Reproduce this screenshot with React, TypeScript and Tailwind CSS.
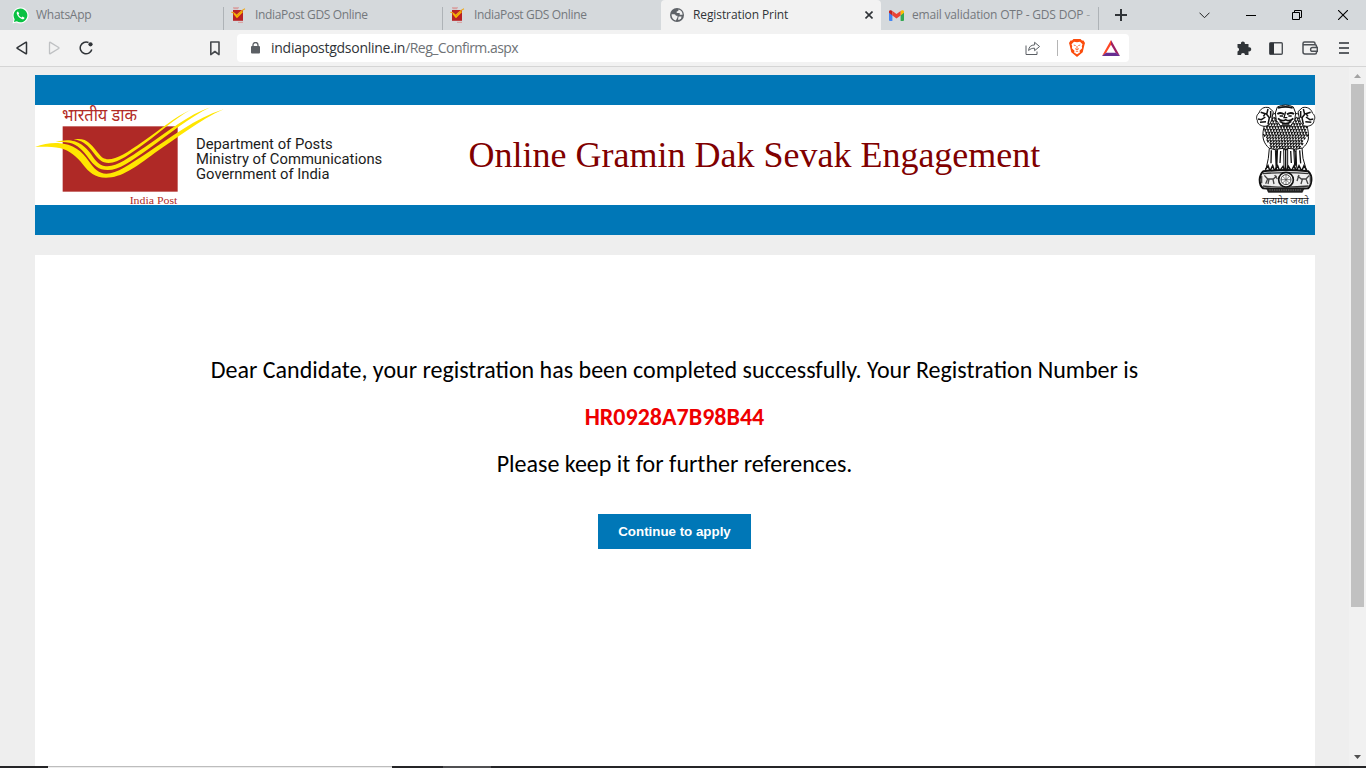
import React from "react";

type Kids = { children: React.ReactNode };

function WhatsAppIcon() {
  return (
    <svg width="17" height="17" viewBox="0 0 17 17">
      <path d="M.5 16.5 1.6 12.4A8 8 0 1 1 4.6 15.4Z" fill="#fff" />
      <path d="M1.9 15.1 2.7 12.2A6.9 6.9 0 1 1 4.9 14.3Z" fill="#0ac143" />
      <path
        d="M6 4.4c-.9.2-1.6 1.2-1.2 2.4.8 2.5 3 4.7 5.4 5.4 1.2.3 2.2-.4 2.3-1.5l-2-1.1-.9.9C8.200 10 7 8.800 6.500 7.500l.7-.9Z"
        fill="#fff"
      />
    </svg>
  );
}

function PostIcon() {
  return (
    <svg width="15" height="16" viewBox="0 0 15 16">
      <path d="M2 .8h6M2.500 1.700h4.500M7 15.300h5" stroke="#d99a9a" strokeWidth="1" />
      <rect x="2" y="3" width="10" height="10.800" fill="#b92125" />
      <path d="M.3 5.300c2.500-.3 3.600.8 5 3.300C8 6.600 10 3.500 14 1.800" stroke="#f0a818" strokeWidth="1.200" fill="none" />
      <path d="M3 6.500l3 3.500L11.500 4.500" stroke="#f7b500" strokeWidth="1.600" fill="none" />
    </svg>
  );
}

function GlobeIcon() {
  return (
    <svg width="14" height="14" viewBox="0 0 14 14">
      <circle cx="7" cy="7" r="7" fill="#5f6368" />
      <path d="M1.600 6.200h2.800q1.300.1 1.500 1.500h1.600v1.500L5.900 12.600A5.700 5.700 0 0 1 1.600 6.200Z" fill="#f2f2f2" />
      <path d="M8.600 1.600Q8.700 3.500 6.700 3.500V5h3v1.700h2.900A5.700 5.700 0 0 0 8.600 1.600Z" fill="#f2f2f2" />
      <path d="M8.600 8.500h3l-.5 1.800-1.600 1.500H8Z" fill="#f2f2f2" />
    </svg>
  );
}

function GmailIcon() {
  return (
    <svg width="15" height="11" viewBox="0 0 15 11">
      <path d="M0 2.200 3.400 4.700V11H1a1 1 0 0 1-1-1Z" fill="#4285f4" />
      <path d="M15 2.200 11.600 4.700V11H14a1 1 0 0 0 1-1Z" fill="#34a853" />
      <path d="M11.600 1 13 .3c1-.5 2 .3 2 1.200v1.300l-3.400 2.600Z" fill="#fbbc04" />
      <path d="M3.400 1 2 .3C1 -.2 0 .6 0 1.500v1.300l3.400 2.600Z" fill="#c5221f" />
      <path d="M3.400 1 7.500 4.100 11.600 1v4.400L7.500 8.500 3.400 5.400Z" fill="#ea4335" />
    </svg>
  );
}

function TabText({ children }: Kids) {
  return <span className="whitespace-nowrap text-[12px] leading-[16px]">{children}</span>;
}

function TabBar() {
  return (
    <div className="flex h-[30px] bg-[#d5d9dc] font-['Open_Sans',sans-serif] text-[#74787c]">
      <div className="flex w-[223px] items-center pl-[12px]">
        <WhatsAppIcon />
        <span className="ml-[7px] flex tracking-[-0.25px]"><TabText>WhatsApp</TabText></span>
      </div>
      {[0, 1].map((i) => (
        <div key={i} className="flex w-[219px] items-center">
          <div className="mt-[7px] h-[23px] w-px bg-[#aeb3b7]" />
          <div className="ml-[7px]"><PostIcon /></div>
          <span className="ml-[9px] flex tracking-[-0.33px]"><TabText>IndiaPost GDS Online</TabText></span>
        </div>
      ))}
      <div className="flex w-[220px] items-center rounded-t-[4px] bg-[#f2f2f2] pl-[9px] text-[#303438]">
        <GlobeIcon />
        <span className="ml-[9px] flex tracking-[-0.1px]"><TabText>Registration Print</TabText></span>
        <svg className="ml-auto mr-[8px]" width="8" height="8" viewBox="0 0 8 8">
          <path d="M.5.5l7 7M7.500.5l-7 7" stroke="#303438" strokeWidth="1.600" />
        </svg>
      </div>
      <div className="flex w-[218px] items-center pl-[8px]">
        <GmailIcon />
        <span className="ml-[8px] flex tracking-[-0.19px]">
          <TabText>email validation OTP - GDS DOP <span className="text-[#a0a4a7]">-</span></TabText>
        </span>
        <div className="ml-auto mt-[7px] h-[23px] w-px bg-[#aeb3b7]" />
      </div>
      <div className="flex flex-1 items-center text-black">
        <svg className="ml-[16px]" width="12" height="12" viewBox="0 0 12 12">
          <path d="M6 0v12M0 6h12" stroke="#303438" strokeWidth="2" />
        </svg>
        <svg className="ml-[72px]" width="11" height="7" viewBox="0 0 11 7">
          <path d="M.5.7l5 5 5-5" stroke="#222" fill="none" />
        </svg>
        <div className="ml-[36px] h-px w-[10px] bg-black" />
        <svg className="ml-[36px]" width="10" height="10" viewBox="0 0 10 10">
          <path d="M.5 2.500h7v7h-7zM2.500 2.500v-2h7v7h-2" stroke="#000" fill="none" />
        </svg>
        <svg className="ml-[36px]" width="10" height="10" viewBox="0 0 10 10">
          <path d="M0 0l10 10M10 0L0 10" stroke="#000" strokeWidth="1.100" />
        </svg>
      </div>
    </div>
  );
}

function Toolbar() {
  return (
    <div className="flex h-[37px] items-center border-b border-[#d5d5d5] bg-[#f2f2f2]">
      <svg className="ml-[16px]" width="12" height="14" viewBox="0 0 12 14">
        <path d="M10.500 1.800v10.400q0 .9-.8.4L1.300 7.500q-.6-.5 0-1L9.700 1.400q.8-.5.800.4Z" stroke="#303438" strokeWidth="1.500" fill="none" />
      </svg>
      <svg className="ml-[20px]" width="12" height="14" viewBox="0 0 12 14">
        <path d="M1.500 1.800v10.400q0 .9.8.4L10.700 7.500q.6-.5 0-1L2.300 1.400q-.8-.5-.8.4Z" stroke="#bfc1c3" strokeWidth="1.300" fill="none" />
      </svg>
      <svg className="ml-[19px]" width="15" height="14" viewBox="0 0 15 14">
        <path d="M12.800 8.500A5.900 5.900 0 1 1 9.500 1.500" stroke="#303438" strokeWidth="1.500" fill="none" />
        <circle cx="11.500" cy="3.300" r="2.100" fill="#303438" />
      </svg>
      <svg className="ml-[115px]" width="12" height="15" viewBox="0 0 12 15">
        <path d="M1.800 1h8.200v12.600L5.900 10.500 1.800 13.600Z" stroke="#46494d" strokeWidth="1.600" fill="none" strokeLinejoin="round" />
      </svg>
      <div className="ml-[16px] flex h-[28px] w-[892px] items-center rounded-[4px] bg-white pl-[14px]">
        <svg width="9" height="12" viewBox="0 0 9 12">
          <rect x="0" y="4" width="9" height="7.500" rx="1" fill="#5b5f64" />
          <path d="M2 4.500V3a2.500 2.500 0 0 1 5 0v1.500" stroke="#5b5f64" strokeWidth="1.300" fill="none" />
        </svg>
        <span className="ml-[11px] whitespace-nowrap font-['Open_Sans',sans-serif] text-[14px] leading-[20px] text-[#303438]">
          <span className="tracking-[-0.27px]">indiapostgdsonline.in</span>
          <span className="tracking-[-0.54px] text-[#6e7276]">/Reg_Confirm.aspx</span>
        </span>
        <svg className="ml-auto" width="16" height="14" viewBox="0 0 16 14">
          <path d="M1 4.500v9h11v-3" stroke="#5b5f64" fill="none" />
          <path d="M3.600 9.500c.2-3.700 2.400-5.500 6-5.600V1.300l5 4.200-5 4.200V7.200C7 7.200 5.400 7.800 3.600 9.500Z" stroke="#5b5f64" fill="none" strokeLinejoin="round" />
        </svg>
        <div className="ml-[16px] h-[16px] w-px bg-[#b5b5b5]" />
        <svg className="ml-[11px]" width="16" height="18" viewBox="0 0 16 18">
          <path d="M4.500 0h7l1.500 1.500h1.500L16 4l-.6 2-1.700 7.200L8 18l-5.700-4.800L.6 6 0 4l1.500-2.500H3Z" fill="#fb4c0c" />
          <path d="M5 2.800 8 3.200l3-.4L13.500 5.200l-.7 2 .3 2-2.600 2.600.4 1.600L8 15.300l-2.900-1.900.4-1.600-2.600-2.600.3-2-.7-2Z" fill="#fff" />
          <path d="M4.700 6l2 .6M11.300 6l-2 .6M8 7v3M6 9.500l2 1.400 2-1.400M6.800 12.700 8 12l1.200.7" stroke="#fb4c0c" strokeWidth=".8" fill="none" />
        </svg>
        <svg className="ml-[17px] mr-[9px]" width="18" height="16" viewBox="0 0 18 16">
          <path d="M9 0v4.800L4 13 0 16Z" fill="#ff4724" />
          <path d="M9 0l9 16-4.200-3L9 4.800Z" fill="#9e1f63" />
          <path d="M0 16l4-3.300h10L18 16Z" fill="#662d91" />
        </svg>
      </div>
      <svg className="ml-[107px]" width="16" height="15" viewBox="0 0 16 15">
        <path d="M1.500 3H5a2 2 0 1 1 3.800 0H12.500v3.300a2.100 2.100 0 1 1 0 4V14H9a2 2 0 0 0-4 0H1.500v-3.600a2 2 0 0 0 0-3.900Z" fill="#303438" />
      </svg>
      <svg className="ml-[17px]" width="14" height="13" viewBox="0 0 14 13">
        <rect x=".7" y=".7" width="12.600" height="11.600" rx="1" fill="none" stroke="#4c5055" strokeWidth="1.400" />
        <rect x="1" y="1" width="4" height="11" fill="#303438" />
      </svg>
      <svg className="ml-[19px]" width="16" height="14" viewBox="0 0 16 14">
        <path d="M13 3.700V2.500Q13 1 11.500 1H2.500Q1 1 1 2.500v8.500Q1 13 3 13h10q1.500 0 1.500-1.500V5.200Q14.500 3.700 13 3.700H1" fill="none" stroke="#4c5055" strokeWidth="1.500" />
        <path d="M15.300 6.500h-4.800a1.900 1.900 0 0 0 0 3.800h4.800Z" fill="#f2f2f2" stroke="#4c5055" strokeWidth="1.400" />
      </svg>
      <div className="ml-[21px] flex flex-col gap-[3px]">
        <div className="h-[2px] w-[10px] bg-[#5c6064]" />
        <div className="h-[2px] w-[10px] bg-[#5c6064]" />
        <div className="h-[2px] w-[10px] bg-[#5c6064]" />
      </div>
    </div>
  );
}

function PostLogo() {
  return (
    <svg width="190" height="100" viewBox="15 105 570 300" className="shrink-0 overflow-visible">
      <text x="96" y="154" fontFamily="'Noto Sans', sans-serif" fontSize="52" textLength="225" lengthAdjust="spacingAndGlyphs" fill="#b22a25">भारतीय डाक</text>
      <rect x="98" y="169" width="345" height="196" fill="#af2926" />
      <g fill="#ffe600">
        <path d="M15 231C38 222 62 218 84 219C130 222 156 244 176 273C192 297 207 311 229 311C262 311 296 284 350 250C420 204 495 145 581 118C508 150 440 206 374 249C315 293 275 323 228 323C195 323 176 306 160 285C140 259 118 242 92 235C66 230 40 230 15 231Z" />
        <path d="M77 216C96 210 118 208 134 214C165 224 180 248 194 268C206 284 218 289 233 289C262 288 296 264 344 232C415 184 475 134 541 112C477 142 420 192 352 239C302 274 268 300 233 300C206 300 191 285 177 266C160 241 141 223 118 218C104 216 90 216 77 216Z" />
        <path d="M131 208C142 206 154 206 164 210C182 219 195 238 207 252C215 263 222 267 235 268C260 268 294 246 338 215C390 179 435 140 482 119C434 146 392 185 345 220C300 252 268 278 236 279C215 279 205 267 194 253C180 234 166 217 148 212C142 210 137 209 131 208Z" />
      </g>
      <text x="299" y="403" fontFamily="'Liberation Serif', serif" fontSize="32" textLength="143" lengthAdjust="spacingAndGlyphs" fill="#b22a25">India Post</text>
    </svg>
  );
}

function Emblem() {
  const curls: [number, number][] = [];
  for (let row = 0; row < 12; row++) {
    const half = row < 6 ? 58 + row : 64 - (row - 6) * 5;
    for (let x = -half; x <= half; x += 8.5) {
      curls.push([137 + x + (row % 2) * 4, 70 + row * 8.5]);
    }
  }
  return (
    <svg width="60" height="100" viewBox="45 30 180 300" className="shrink-0 overflow-visible">
      <path d="M84 66C72 90 66 112 70 132C74 148 86 162 104 170C126 160 148 160 170 170C188 162 202 148 205 132C207 112 202 90 190 66L172 56H102Z" stroke="#111" strokeWidth="3" fill="#fff" />
      {curls.map(([x, y], i) => (
        <path key={i} d={`M${x - 4} ${y - 3}q5 0 4 7l4 -6`} stroke="#111" strokeWidth="3.4" fill="none" />
      ))}
      <g stroke="#111" strokeWidth="3" fill="#fff">
        <path d="M87 38C72 34 60 42 57 54C49 60 48 70 52 76C52 88 62 92 72 94C84 94 92 86 95 74L100 50Z" />
        <path d="M187 38C202 34 214 42 217 54C225 60 226 70 222 76C222 88 212 92 202 94C190 94 182 86 179 74L174 50Z" />
        <path d="M112 36Q137 24 160 36L167 54L164 76L152 92H121L109 76L106 54Z" />
      </g>
      <g fill="none" stroke="#111">
        <path d="M114 39Q137 32 158 39" strokeWidth="5" />
        <path d="M112 57Q122 50 132 58M141 58Q152 50 162 57" strokeWidth="6" />
        <path d="M119 63H129M145 63H155M137 50L132 68H142" strokeWidth="4" />
        <path d="M114 70Q125 82 137 74Q149 82 160 70M119 79Q137 92 154 79M126 87H148" strokeWidth="5" />
        <path d="M62 52L76 56L70 64M54 72L64 74L76 66M60 82L78 80M84 42L80 58L88 68L84 88M92 48V68M212 52L198 56L204 64M220 72L210 74L198 66M214 82L196 80M190 42L194 58L186 68L190 88M182 48V68" strokeWidth="4.5" />
      </g>
      <g fill="#fff" stroke="#111" strokeWidth="3">
        <path d="M88 160L85 190L79 218Q72 232 84 236H104L108 216L106 164Z" />
        <path d="M113 162L110 214L109 236H131L132 216L131 160Z" />
        <path d="M143 160L143 216L146 236H168L164 214L161 162Z" />
        <path d="M168 163L170 216L176 236H195Q203 230 197 218L189 190L186 159Z" />
      </g>
      <path d="M94 166L93 205M110 168V212M122 168L120 204M137 166V224M152 168L154 204M165 168L167 212M179 166L182 205" stroke="#111" strokeWidth="4" />
      <path d="M76 224L84 212L90 228L98 212L104 228L113 212L119 228L129 214L137 230L145 214L154 228L162 212L169 228L177 212L185 228L192 212L200 226M80 232H196" stroke="#111" strokeWidth="4.500" fill="none" />
      <path d="M70 229Q137 221 205 229Q216 240 214 258Q212 274 204 280Q137 286 70 280Q59 273 59 254Q60 238 70 229Z" fill="#eee" stroke="#111" strokeWidth="6" />
      <path d="M69 236Q137 230 206 236M69 273Q137 280 206 273" stroke="#333" strokeWidth="4" fill="none" />
      <path d="M73 241L83 252L77 266M83 252H100L110 243M99 253L102 267M87 253L84 267M104 240L112 252M208 241L198 252L204 267M198 252H184L173 243M187 253L183 267M177 240L171 258M65 243V265M211 243V265" stroke="#444" strokeWidth="4" fill="none" />
      <circle cx="138" cy="254" r="22" fill="#fff" stroke="#111" strokeWidth="5" />
      <circle cx="138" cy="254" r="15" fill="none" stroke="#444" strokeWidth="3" />
      <path d="M138 239V269M123 254H153M127 243L149 265M149 243L127 265" stroke="#444" strokeWidth="2" />
      <path d="M80 280H192L187 292H85Z" fill="#222" stroke="#111" strokeWidth="2" />
      <path d="M88 285H184" stroke="#999" strokeWidth="2" strokeDasharray="4 3" />
      <text x="67" y="327" fontFamily="'Noto Sans', sans-serif" fontSize="27" textLength="139" lengthAdjust="spacingAndGlyphs" fill="#111">सत्यमेव जयते</text>
    </svg>
  );
}

function Banner() {
  return (
    <header className="border-y-[30px] border-[#0077b7] bg-white">
      <div className="flex h-[100px]">
        <PostLogo />
        <div className="-ml-[29px] w-[272.5px] whitespace-nowrap pt-[31.5px] font-['Roboto',sans-serif] text-[14.8px] leading-[15px] text-[#1c1c1c]">
          <p>Department of Posts</p>
          <p>Ministry of Communications</p>
          <p>Government of India</p>
        </div>
        <h1 className="whitespace-nowrap pt-[29px] font-['Liberation_Serif',serif] text-[36px] leading-[42px] text-[#800000]">
          Online Gramin Dak Sevak Engagement
        </h1>
        <div className="ml-auto flex"><Emblem /></div>
      </div>
    </header>
  );
}

function Scrollbar() {
  return (
    <div className="flex w-[17px] flex-col items-center bg-[#f1f1f1]">
      <svg className="mt-[7px]" width="7" height="4" viewBox="0 0 7 4"><path d="M0 4L3.500 0 7 4Z" fill="#a3a3a3" /></svg>
      <div className="mt-[6px] h-[523px] w-[13px] bg-[#c1c1c1]" />
      <svg className="mb-[7px] mt-auto" width="7" height="4" viewBox="0 0 7 4"><path d="M0 0H7L3.500 4Z" fill="#505050" /></svg>
    </div>
  );
}

export default function App() {
  return (
    <div className="flex h-[768px] w-[1366px] flex-col overflow-hidden">
      <TabBar />
      <Toolbar />
      <div className="flex h-[699px]">
        <div className="flex flex-1 flex-col bg-[#eeeeee] pl-[35px] pr-[34px] pt-[8px]">
          <Banner />
          <main className="mt-[20px] flex flex-1 flex-col items-center bg-white pr-px pt-[100px] font-['Carlito','Lato',sans-serif] text-[24px] leading-[29px] text-black">
            <p className="whitespace-nowrap">
              Dear Candidate, your registration has been completed successfully. Your Registration Number is
            </p>
            <p className="mt-[18px] font-bold text-[#ee0000]">HR0928A7B98B44</p>
            <p className="mt-[18px]">Please keep it for further references.</p>
            <button className="mt-[36px] h-[35px] w-[153px] bg-[#0077b7] font-['Liberation_Sans',Arial,sans-serif] text-[13.333px] font-bold leading-[15px] text-white">
              Continue to apply
            </button>
          </main>
        </div>
        <Scrollbar />
      </div>
      <div className="flex h-[2px] bg-[#252527]">
        <div className="ml-[48px] h-[2px] w-[344px] border-t border-[#bdbdbd] bg-[#ededed]" />
        <div className="ml-[51px] h-[2px] w-[48px] bg-[#505052]" />
      </div>
    </div>
  );
}
